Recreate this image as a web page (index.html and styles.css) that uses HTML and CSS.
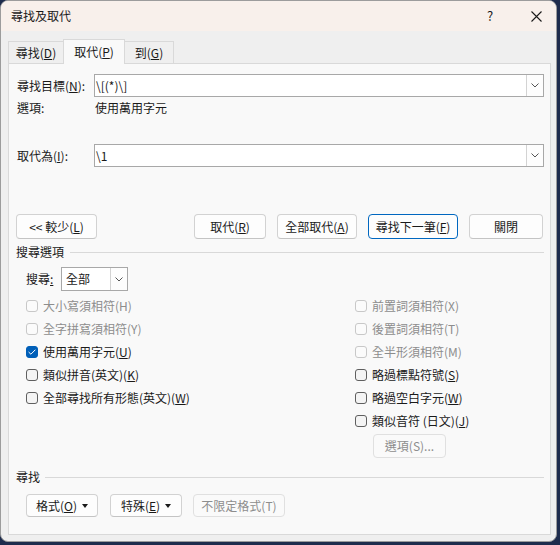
FILE: index.html
```html
<!DOCTYPE html>
<html lang="zh-Hant">
<head>
    <meta charset="UTF-8">
    <title>尋找及取代</title>
    <link rel="stylesheet" href="styles.css">
</head>
<body>
    <div class="window">
        <div class="titlebar">
            <span class="title">尋找及取代</span>
            <span class="caption-btn help">?</span>
            <span class="caption-btn close">
                <svg width="11" height="11" viewBox="0 0 11 11"><path d="M0.5 0.5 L10.5 10.5 M10.5 0.5 L0.5 10.5" stroke="#1a1a1a" stroke-width="1.1" fill="none"/></svg>
            </span>
        </div>

        <div class="client">
            <div class="tabs">
                <div class="tab tab-find"><span>尋找(<u>D</u>)</span></div>
                <div class="tab tab-replace active"><span>取代(<u>P</u>)</span></div>
                <div class="tab tab-goto"><span>到(<u>G</u>)</span></div>
            </div>

            <div class="panel">
                <div class="field-row">
                    <label>尋找目標(<u>N</u>):</label>
                    <div class="combo">
                        <span class="combo-text">\[(*)\]</span>
                        <span class="combo-btn"><svg width="8" height="5" viewBox="0 0 8 5"><path d="M0.5 0.5 L4 4 L7.5 0.5" stroke="#555" fill="none"/></svg></span>
                    </div>
                </div>
                <div class="field-row info-row">
                    <span>選項:</span>
                    <span class="info-value">使用萬用字元</span>
                </div>
                <div class="field-row replace-row">
                    <label>取代為(<u>I</u>):</label>
                    <div class="combo">
                        <span class="combo-text">\1</span>
                        <span class="combo-btn"><svg width="8" height="5" viewBox="0 0 8 5"><path d="M0.5 0.5 L4 4 L7.5 0.5" stroke="#555" fill="none"/></svg></span>
                    </div>
                </div>

                <div class="actions">
                    <button class="btn btn-less"><span>&lt;&lt; 較少(<u>L</u>)</span></button>
                    <div class="actions-right">
                        <button class="btn w72"><span>取代(<u>R</u>)</span></button>
                        <button class="btn w80"><span>全部取代(<u>A</u>)</span></button>
                        <button class="btn w90 default"><span>尋找下一筆(<u>F</u>)</span></button>
                        <button class="btn w74"><span>關閉</span></button>
                    </div>
                </div>

                <div class="group-head">搜尋選項</div>

                <div class="search-row">
                    <label>搜尋<u>:</u></label>
                    <div class="combo small">
                        <span class="combo-text">全部</span>
                        <span class="combo-btn"><svg width="8" height="5" viewBox="0 0 8 5"><path d="M0.5 0.5 L4 4 L7.5 0.5" stroke="#555" fill="none"/></svg></span>
                    </div>
                </div>

                <div class="options">
                    <div class="opt-col">
                        <div class="opt disabled"><span class="box"></span><span>大小寫須相符(H)</span></div>
                        <div class="opt disabled"><span class="box"></span><span>全字拼寫須相符(Y)</span></div>
                        <div class="opt"><span class="box checked"><svg width="8" height="6" viewBox="0 0 8 6"><path d="M0.6 3 L2.9 5.2 L7.4 0.7" stroke="#fff" stroke-width="1" fill="none"/></svg></span><span>使用萬用字元(<u>U</u>)</span></div>
                        <div class="opt"><span class="box"></span><span>類似拼音(英文)(<u>K</u>)</span></div>
                        <div class="opt"><span class="box"></span><span>全部尋找所有形態(英文)(<u>W</u>)</span></div>
                    </div>
                    <div class="opt-col">
                        <div class="opt disabled"><span class="box"></span><span>前置詞須相符(X)</span></div>
                        <div class="opt disabled"><span class="box"></span><span>後置詞須相符(T)</span></div>
                        <div class="opt disabled"><span class="box"></span><span>全半形須相符(M)</span></div>
                        <div class="opt"><span class="box"></span><span>略過標點符號(<u>S</u>)</span></div>
                        <div class="opt"><span class="box"></span><span>略過空白字元(<u>W</u>)</span></div>
                        <div class="opt"><span class="box"></span><span>類似音符 (日文)(<u>J</u>)</span></div>
                        <button class="btn btn-options disabled"><span>選項(S)...</span></button>
                    </div>
                </div>

                <div class="group-head find-head">尋找</div>

                <div class="format-row">
                    <button class="btn w72 menu"><span>格式(<u>O</u>)</span><i class="caret"></i></button>
                    <button class="btn w72 menu"><span>特殊(<u>E</u>)</span><i class="caret"></i></button>
                    <button class="btn w92 disabled"><span>不限定格式(T)</span></button>
                </div>
            </div>
        </div>
    </div>
</body>
</html>
```

FILE: styles.css
```css
* {
    margin: 0;
    padding: 0;
    box-sizing: border-box;
}

body {
    background: #1e2c4d;
    font-family: "Noto Sans CJK TC", "Noto Sans", sans-serif;
    font-size: 12px;
    line-height: 16px;
    color: #1a1a1a;
}

u {
    text-underline-offset: 1px;
}

.window {
    width: 557px;
    height: 542px;
    border: 1px solid #9c9c9c;
    border-radius: 8px;
    overflow: hidden;
    background: #efefef;
    display: flex;
    flex-direction: column;
}

/* caption */
.titlebar {
    height: 30px;
    background: #f8f0eb;
    display: flex;
    align-items: center;
    padding-left: 10px;
}

.title {
    flex: 1;
}

.caption-btn {
    height: 30px;
    display: flex;
    align-items: center;
    justify-content: center;
}

.help {
    width: 46px;
    margin-right: 3px;
    font-size: 13px;
}

.close {
    width: 40px;
}

/* tabs + page */
.client {
    flex: 1;
    display: flex;
    flex-direction: column;
    padding: 8px 5px 6px 7px;
}

.tabs {
    display: flex;
    align-items: flex-end;
    height: 24px;
}

.tab {
    height: 22px;
    border: 1px solid #d9d9d9;
    border-bottom: none;
    background: #efefef;
    display: flex;
    align-items: center;
    justify-content: center;
}

.tab-find { width: 56px; }
.tab-goto { width: 50px; }

.tab.active {
    width: 62px;
    height: 25px;
    margin: 0 -1px -1px;
    background: #f9f9f9;
    position: relative;
    z-index: 1;
}

.panel {
    flex: 1;
    border: 1px solid #d9d9d9;
    background: #f9f9f9;
    padding: 10px 6px 0 7px;
}

.field-row {
    display: grid;
    grid-template-columns: 77px 1fr;
    align-items: center;
    padding-left: 1px;
}

.info-row {
    margin-top: 3px;
}

.info-value {
    padding-left: 1px;
}

.replace-row {
    margin-top: 28px;
}

.combo {
    height: 23px;
    border: 1px solid #a8a8a8;
    background: #fff;
    display: flex;
}

.combo-text {
    flex: 1;
    padding-left: 1px;
    display: flex;
    align-items: center;
}

.combo-btn {
    width: 17px;
    border-left: 1px solid #d3d3d3;
    background: #fdfdfd;
    display: flex;
    align-items: center;
    justify-content: center;
}

.combo.small {
    width: 67px;
    height: 24px;
}

.combo.small .combo-text {
    padding-left: 4px;
}

/* buttons */
.btn {
    height: 25px;
    border: 1px solid #d2d2d2;
    border-bottom-color: #c4c4c4;
    border-radius: 4px;
    background: #fdfdfd;
    font: inherit;
    color: #1a1a1a;
    display: flex;
    align-items: center;
    justify-content: center;
}

.btn.default {
    border: 1px solid #0067c0;
}

.btn.disabled {
    color: #8d8d8d;
    border-color: #e0e0e0;
    background: #fafafa;
}

.w72 { width: 72px; }
.w74 { width: 74px; }
.w80 { width: 80px; }
.w90 { width: 90px; }
.w92 { width: 92px; }

.actions {
    display: flex;
    margin-top: 47px;
    margin-right: 1px;
}

.btn-less {
    width: 81px;
}

.actions-right {
    margin-left: auto;
    display: flex;
    gap: 11px;
}

/* group headers with rule */
.group-head {
    display: flex;
    align-items: center;
    gap: 6px;
    height: 16px;
    margin-top: 5px;
}

.group-head::after {
    content: "";
    flex: 1;
    height: 1px;
    background: #d9d9d9;
}

.find-head {
    margin-top: 11px;
    gap: 5px;
}

.search-row {
    display: flex;
    align-items: center;
    margin-top: 7px;
    padding-left: 10px;
}

.search-row label {
    width: 35px;
}

/* check boxes */
.options {
    display: grid;
    grid-template-columns: 329px 1fr;
    padding-left: 10px;
    margin-top: 3px;
}

.opt {
    height: 23px;
    display: flex;
    align-items: center;
    gap: 5px;
}

.box {
    width: 12px;
    height: 12px;
    border: 1px solid #5f5f5f;
    border-radius: 3px;
    background: #f4f4f4;
    display: flex;
    align-items: center;
    justify-content: center;
}

.box.checked {
    background: #005fb8;
    border-color: #005fb8;
}

.opt.disabled {
    color: #8d8d8d;
}

.opt.disabled .box {
    border-color: #c8c8c8;
    background: #fbfbfb;
}

.btn-options {
    width: 73px;
    height: 24px;
    margin: 2px 0 0 18px;
}

.format-row {
    display: flex;
    gap: 12px;
    margin-top: 9px;
    padding-left: 10px;
}

.format-row .btn {
    height: 23px;
}

.format-row .btn:last-child {
    margin-left: -1px;
}

.caret {
    width: 0;
    height: 0;
    margin-left: 5px;
    border-left: 3.5px solid transparent;
    border-right: 3.5px solid transparent;
    border-top: 4px solid #1a1a1a;
}
```
